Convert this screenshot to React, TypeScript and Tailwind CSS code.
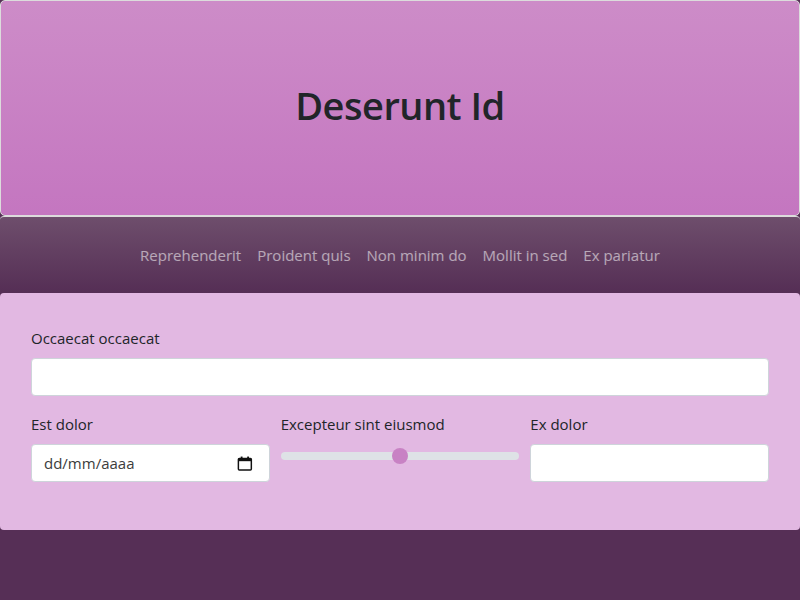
const navItems = ["Reprehenderit", "Proident quis", "Non minim do", "Mollit in sed", "Ex pariatur"];

const CalendarIcon = () => (
  <svg width="17" height="17" viewBox="0 0 17 17" fill="none">
    <rect x="1.5" y="3" width="14" height="12.5" rx="1" stroke="#111" strokeWidth="1.6" />
    <rect x="1.5" y="3" width="14" height="3" fill="#111" />
    <rect x="4" y="1" width="2" height="3" fill="#111" />
    <rect x="11" y="1" width="2" height="3" fill="#111" />
  </svg>
);

const App = () => {
  return (
    <div className="min-h-[600px] bg-[#562f56] font-['Open_Sans',sans-serif] text-[#212529]">
      <header className="flex h-[216px] items-center justify-center rounded-[5px] border border-[#dcdcdc] bg-linear-to-b from-[#cd8cc8] to-[#c476c0] pb-[4px]">
        <h1 className="text-[38px] leading-tight font-semibold tracking-[-0.5px] text-[#212529]">Deserunt Id</h1>
      </header>
      <nav className="flex h-[77px] items-center justify-center rounded-[4px] border-t border-[#dcdcdc] bg-linear-to-b from-[#6e4e6c] to-[#552e55]">
        <ul className="flex">
          {navItems.map((item) => (
            <li key={item}>
              <a href="#" className="block px-2 text-[15px] text-white/55">
                {item}
              </a>
            </li>
          ))}
        </ul>
      </nav>
      <section className="rounded-[4px] bg-[#e2b8e2] px-[31px] pt-[33px] pb-[48px]">
        <label className="mb-2 block text-[15px] leading-6">Occaecat occaecat</label>
        <input
          type="text"
          className="block h-[38px] w-full rounded-[4px] border border-[#ced4da] bg-white px-3 outline-none"
        />
        <div className="mt-4 grid grid-cols-3 gap-x-[11px]">
          <div>
            <label className="mb-2 block text-[15px] leading-6">Est dolor</label>
            <div className="flex h-[38px] items-center justify-between rounded-[4px] border border-[#ced4da] bg-white pr-[16px] pl-3">
              <input
                type="text"
                placeholder="dd/mm/aaaa"
                className="w-full bg-transparent text-[15px] outline-none placeholder:text-[#3c3c3c]"
              />
              <CalendarIcon />
            </div>
          </div>
          <div>
            <label className="mb-2 block text-[15px] leading-6">Excepteur sint eiusmod</label>
            <input
              type="range"
              defaultValue={50}
              className="block h-6 w-full cursor-pointer appearance-none bg-transparent [&::-webkit-slider-runnable-track]:h-2 [&::-webkit-slider-runnable-track]:rounded-full [&::-webkit-slider-runnable-track]:bg-[#dee2e6] [&::-webkit-slider-thumb]:-mt-1 [&::-webkit-slider-thumb]:h-4 [&::-webkit-slider-thumb]:w-4 [&::-webkit-slider-thumb]:appearance-none [&::-webkit-slider-thumb]:rounded-full [&::-webkit-slider-thumb]:bg-[#c882c4]"
            />
          </div>
          <div>
            <label className="mb-2 block text-[15px] leading-6">Ex dolor</label>
            <input
              type="text"
              className="block h-[38px] w-full rounded-[4px] border border-[#ced4da] bg-white px-3 outline-none"
            />
          </div>
        </div>
      </section>
    </div>
  );
};

export default App;
